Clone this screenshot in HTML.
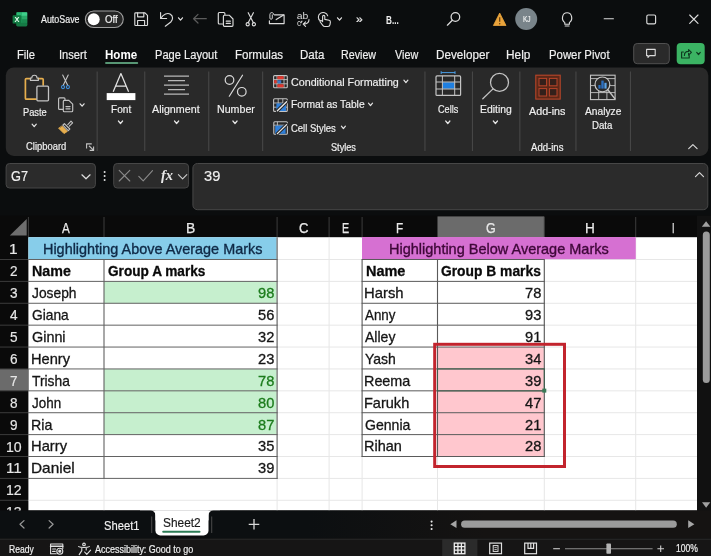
<!DOCTYPE html>
<html lang="en"><head><meta charset="utf-8"><title>Excel</title><style>
*{box-sizing:border-box;margin:0;padding:0}
html,body{width:711px;height:556px;overflow:hidden;background:#0b0d0e}
body{position:relative;font-family:"Liberation Sans",sans-serif}
#app{position:absolute;left:0;top:0;width:711px;height:556px;overflow:hidden;will-change:transform}
#app div,#app svg,#app span.t{position:absolute;display:block}
span.t{white-space:nowrap;line-height:1;transform-origin:0 0}
</style></head><body><div id="app">
<svg style="left:0;top:0;" width="711" height="556" viewBox="0 0 711 556" fill="none">
<rect x="16.5" y="12.3" width="10.7" height="14" rx="1.2" fill="#1d9a5b"/>
<rect x="16.5" y="12.3" width="5.4" height="3.6" fill="#2cb673"/>
<rect x="21.9" y="12.3" width="5.3" height="3.6" fill="#3fce8a"/>
<rect x="21.9" y="15.9" width="5.3" height="3.5" fill="#2aa868"/>
<rect x="21.9" y="19.4" width="5.3" height="3.4" fill="#1a8a50"/>
<rect x="16.5" y="22.8" width="10.7" height="3.5" rx="1" fill="#157a45"/>
<rect x="12.6" y="15.2" width="8.6" height="8.4" rx="0.9" fill="#117a42"/>
<text x="16.9" y="22.2" font-family="Liberation Sans, sans-serif" font-size="7.4" font-weight="700" fill="#e8fff2" text-anchor="middle">X</text>
</svg>
<span class="t" style='left:40.90px;top:14.00px;font-size:10.5px;color:#f0f0f0;transform:scaleX(0.8459);-webkit-text-stroke:0.18px;'>AutoSave</span>
<svg style="left:0;top:0" width="711" height="556" viewBox="0 0 711 556"><defs><linearGradient id="g0" x1="0" y1="0" x2="1" y2="0"><stop offset="0.2" stop-color="#0c0f11"/><stop offset="0.55" stop-color="#151312"/></linearGradient></defs>
<rect x="85.35" y="10.95" width="37.9" height="16.6" rx="8.45" fill="#262626" stroke="#a0a0a0" stroke-width="1.1"/>
<rect x="87.8" y="13.3" width="11.9" height="11.9" rx="5.95" fill="#ffffff"/>
</svg>
<span class="t" style='left:104.70px;top:15.00px;font-size:10px;color:#f0f0f0;transform:scaleX(0.9682);-webkit-text-stroke:0.18px;'>Off</span>
<svg style="left:0;top:0;" width="711" height="556" viewBox="0 0 711 556" fill="none">
<g stroke="#dcdcdc" stroke-width="1.15" stroke-linejoin="round" stroke-linecap="round">
<path d="M134.8 13.6 q0 -0.8 0.8 -0.8 h9.4 l2.5 2.5 v9.4 q0 0.8 -0.8 0.8 h-11.1 q-0.8 0 -0.8 -0.8 z"/>
<path d="M137.6 12.9 v3.9 h6.2 v-3.9"/>
<path d="M137.6 25.4 v-4.9 h7 v4.9"/>
<path d="M160.6 12.6 V18.5 H166.6"/>
<path d="M160.9 18.2 C163.4 14.2 167.6 12.4 170.4 14.3 C173.4 16.3 173 19.8 170.8 22 L165.3 26.2"/>
</g>
<path d="M178.5 17.8 l2.0 2.3000000000000003 l2.0 -2.3000000000000003" stroke="#e6e6e6" stroke-width="1.2" stroke-linecap="round" stroke-linejoin="round"/>
<g stroke="#5c5c5c" stroke-width="1.2" stroke-linecap="round" stroke-linejoin="round">
<path d="M206.3 18.7 H193.6 M198 14.4 L193.6 18.7 L198 23"/>
</g>
<g stroke="#dcdcdc" stroke-width="1.15" stroke-linejoin="round" stroke-linecap="round">
<path d="M222.5 24 h-3.2 q-1 0 -1 -1 v-9.5 q0 -1 1 -1 h4.6 q1 0 1 1 v1"/>
<path d="M223.4 16.2 q0 -1 1 -1 h4.8 l3.8 3.8 v6.3 q0 1 -1 1 h-7.6 q-1 0 -1 -1 z"/>
<path d="M226.3 21.2 h4 M226.3 23.4 h4" stroke-width="1.3"/>
<path d="M248.2 12.7 L253.4 22.8 M253.4 12.7 L248.2 22.8"/>
<circle cx="247.7" cy="24.3" r="1.6"/>
<circle cx="253.9" cy="24.3" r="1.6"/>
<path d="M274.5 14.8 H284.1 V23.6 H269.4 V20.8"/>
<path d="M276.2 19.6 L283.6 15"/>
<path d="M273.8 14.5 c0 -2.6 -3.9 -2.6 -3.9 0 v3.6 c0 1.6 2.4 1.6 2.4 0 v-3.2" stroke-width="0.95"/>
</g>
<text x="296.7" y="18.6" font-family="Liberation Sans, sans-serif" font-size="8.2" fill="#dcdcdc" textLength="11.6" lengthAdjust="spacingAndGlyphs">ab</text>
<text x="296.9" y="25.6" font-family="Liberation Sans, sans-serif" font-size="8.2" fill="#dcdcdc">c</text>
<g stroke="#dcdcdc" stroke-width="1.1" stroke-linejoin="round" stroke-linecap="round">
<path d="M309 19.6 c0 3 -2 4.6 -5.6 4.6 M305.6 21.8 L303.2 24.2 L305.6 26.4"/>
<path d="M302 21.2 l-1.2 1.6"/>
<path d="M320.3 20.8 c-2.6 -1.6 -2.6 -5.6 0 -7.4 c2.6 -1.8 6.6 -0.8 7.4 2.4"/>
<path d="M322.6 21.6 v-5.2 c0 -1.4 2.2 -1.4 2.2 0 v3 l4.3 0.9 c1 0.2 1.4 0.8 1.3 1.8 l-0.4 2.6 c-0.2 1.2 -0.9 1.8 -2 1.8 h-3.2 c-0.9 0 -1.5 -0.4 -2 -1.1 l-2.6 -3.4 c-0.6 -0.9 0.8 -1.9 1.6 -1.1 z"/>
</g>
<path d="M337.5 17.8 l2.0 2.3000000000000003 l2.0 -2.3000000000000003" stroke="#e6e6e6" stroke-width="1.2" stroke-linecap="round" stroke-linejoin="round"/>
</svg>
<span class="t" style='left:356.20px;top:14.00px;font-size:10.5px;color:#f0f0f0;transform:scaleX(1.1583);-webkit-text-stroke:0.18px;'>»</span>
<span class="t" style='left:386.20px;top:15.00px;font-size:11px;color:#f0f0f0;font-weight:700;transform:scaleX(0.7417);'>B...</span>
<svg style="left:0;top:0;" width="711" height="556" viewBox="0 0 711 556" fill="none">
<g stroke="#dcdcdc" stroke-width="1.25" stroke-linecap="round">
<circle cx="455.4" cy="17" r="4.3"/>
<path d="M452.3 20.2 L447.4 25.2"/>
</g>
<path d="M499.7 13 L506 25.5 H493.4 Z" fill="#e9a33b" stroke="#e9a33b" stroke-width="0.8" stroke-linejoin="round"/>
<path d="M499.7 17.2 V21.8" stroke="#5a3a10" stroke-width="1.2"/>
<circle cx="499.7" cy="23.8" r="0.75" fill="#5a3a10"/>
<circle cx="526.2" cy="19" r="11" fill="#79848a"/>
<g stroke="#dcdcdc" stroke-width="1.15" stroke-linejoin="round" stroke-linecap="round">
<path d="M564.8 22.6 c-4 -3 -2.6 -9.8 2.3 -9.8 c4.9 0 6.300 6.8 2.3 9.800 v1.6 h-4.6 z"/>
<path d="M565.2 26 h3.8"/>
<path d="M604.2 18.7 H613.4"/>
<rect x="646.8" y="15" width="8.8" height="8.8" rx="1.4"/>
<path d="M689.7 15 L698 23.3 M698 15 L689.7 23.3"/>
</g>
</svg>
<span class="t" style='left:522.60px;top:15.00px;font-size:8.5px;color:#eef0f0;transform:scaleX(0.7705);-webkit-text-stroke:0.18px;'>KJ</span>
<span class="t" style='left:17.20px;top:49.00px;font-size:12.5px;color:#f0f0f0;transform:scaleX(0.8989);-webkit-text-stroke:0.18px;'>File</span>
<span class="t" style='left:58.51px;top:49.00px;font-size:12.5px;color:#f0f0f0;transform:scaleX(0.8915);-webkit-text-stroke:0.18px;'>Insert</span>
<span class="t" style='left:105.40px;top:49.00px;font-size:12.5px;color:#fff;font-weight:700;transform:scaleX(0.9273);'>Home</span>
<span class="t" style='left:154.51px;top:49.00px;font-size:12.5px;color:#f0f0f0;transform:scaleX(0.8885);-webkit-text-stroke:0.18px;'>Page Layout</span>
<span class="t" style='left:235.48px;top:49.00px;font-size:12.5px;color:#f0f0f0;transform:scaleX(0.9234);-webkit-text-stroke:0.18px;'>Formulas</span>
<span class="t" style='left:299.98px;top:49.00px;font-size:12.5px;color:#f0f0f0;transform:scaleX(0.9213);-webkit-text-stroke:0.18px;'>Data</span>
<span class="t" style='left:341.14px;top:49.00px;font-size:12.5px;color:#f0f0f0;transform:scaleX(0.8558);-webkit-text-stroke:0.18px;'>Review</span>
<span class="t" style='left:394.80px;top:49.00px;font-size:12.5px;color:#f0f0f0;transform:scaleX(0.8638);-webkit-text-stroke:0.18px;'>View</span>
<span class="t" style='left:436.06px;top:49.00px;font-size:12.5px;color:#f0f0f0;transform:scaleX(0.9379);-webkit-text-stroke:0.18px;'>Developer</span>
<span class="t" style='left:506.45px;top:49.00px;font-size:12.5px;color:#f0f0f0;transform:scaleX(0.9472);-webkit-text-stroke:0.18px;'>Help</span>
<span class="t" style='left:548.99px;top:49.00px;font-size:12.5px;color:#f0f0f0;transform:scaleX(0.9083);-webkit-text-stroke:0.18px;'>Power Pivot</span>
<svg style="left:0;top:0" width="711" height="556" viewBox="0 0 711 556">
<rect x="105.1" y="62.3" width="33.1" height="1.5" rx="0.7" fill="#72c496"/>
<rect x="633.7" y="43.5" width="35.6" height="20.2" rx="3.5" fill="#2a2a2a" stroke="#505050" stroke-width="1"/>
<rect x="676.7" y="43" width="28" height="21.2" rx="4" fill="#3bb363"/>
</svg>
<svg style="left:0;top:0;" width="711" height="556" viewBox="0 0 711 556" fill="none">
<path d="M646.6 49.4 h8.6 v6.2 h-5.6 l-1.6 1.8 v-1.8 h-1.4 z" stroke="#dcdcdc" stroke-width="1.1" stroke-linejoin="round"/>
<g stroke="#0f3a20" stroke-width="1.15" stroke-linejoin="round" stroke-linecap="round">
<path d="M683.4 52 h-1.800 v6 h7.6 v-2.4"/>
<path d="M684.4 55.4 c0 -2.6 1.6 -4 4.2 -4 v-1.800 l2.800 2.800 l-2.800 2.800 v-1.800"/>
</g>
<path d="M696.7 52.4 l1.7999999999999998 2.1 l1.7999999999999998 -2.1" stroke="#0f3a20" stroke-width="1.2" stroke-linecap="round" stroke-linejoin="round"/>
</svg>
<svg style="left:0;top:0" width="711" height="556" viewBox="0 0 711 556">
<rect x="5.8" y="67.4" width="702.5" height="88.5" rx="8" fill="#292929"/>
<rect x="96.6" y="71.5" width="1.1" height="79.5" fill="#464646"/>
<rect x="144.2" y="71.5" width="1.1" height="79.5" fill="#464646"/>
<rect x="208.2" y="71.5" width="1.1" height="79.5" fill="#464646"/>
<rect x="262.1" y="71.5" width="1.1" height="79.5" fill="#464646"/>
<rect x="424.4" y="71.5" width="1.1" height="79.5" fill="#464646"/>
<rect x="471.9" y="71.5" width="1.1" height="79.5" fill="#464646"/>
<rect x="519.3" y="71.5" width="1.1" height="79.5" fill="#464646"/>
<rect x="575.4" y="71.5" width="1.1" height="79.5" fill="#464646"/>
<rect x="629.9" y="71.5" width="1.1" height="79.5" fill="#464646"/>
</svg>
<svg style="left:0;top:0;" width="711" height="556" viewBox="0 0 711 556" fill="none">
<!-- paste -->
<g stroke-linejoin="round" stroke-linecap="round">
<path d="M30.4 78.600 H26.4 q-1 0 -1 1 V98.2 q0 1 1 1 H36" stroke="#e6ae4e" stroke-width="1.7"/>
<path d="M38.2 78.600 H42.2 q1 0 1 1 V85" stroke="#e6ae4e" stroke-width="1.7"/>
<path d="M30.4 80.4 v-2.400 h1.400 c0 -3.600 5.200 -3.600 5.200 0 h1.400 v2.400 z" stroke="#c4c4c4" stroke-width="1.1"/>
<rect x="36.9" y="86.2" width="11.6" height="14.6" rx="1" stroke="#c4c4c4" stroke-width="1.3" fill="#292929"/>
</g>
<path d="M32.1 124.2 l2.1 2.5 l2.1 -2.5" stroke="#e6e6e6" stroke-width="1.2" stroke-linecap="round" stroke-linejoin="round"/>
<!-- scissors -->
<g stroke-linecap="round">
<path d="M62.7 75 L67.8 85.6 M68.2 75 L63.100 85.6" stroke="#c4c4c4" stroke-width="1.1"/>
<circle cx="63" cy="87.1" r="1.55" stroke="#3f8fdc" stroke-width="1.1"/>
<circle cx="67.900" cy="87.1" r="1.55" stroke="#3f8fdc" stroke-width="1.1"/>
</g>
<!-- copy -->
<g stroke="#c4c4c4" stroke-width="1.15" stroke-linejoin="round" stroke-linecap="round">
<path d="M62.6 109.4 h-3 q-1 0 -1 -1 v-9.600 q0 -1 1 -1 h4.400 q1 0 1 1 v1"/>
<path d="M63.3 101.4 q0 -1 1 -1 h4.600 l3.800 3.800 v6.500 q0 1 -1 1 h-7.400 q-1 0 -1 -1 z"/>
<path d="M66 106.600 h4 M66 108.800 h4" stroke-width="1.3"/>
</g>
<path d="M80.1 103.8 l2.0 2.4000000000000004 l2.0 -2.4000000000000004" stroke="#e6e6e6" stroke-width="1.2" stroke-linecap="round" stroke-linejoin="round"/>
<!-- format painter -->
<g stroke-linejoin="round" stroke-linecap="round">
<path d="M67.8 124.600 l3.200 -3.400 l1.600 1.600 l-3.300 3.300" stroke="#c4c4c4" stroke-width="1.1"/>
<path d="M64.4 123.600 l5.400 5.400 l-1.600 1.600 l-5.400 -5.400 z" stroke="#c4c4c4" stroke-width="1.1"/>
<path d="M62.2 126.200 l5.200 5.200 l-3.400 2.200 l-5.200 -5.200 z" fill="#e6ae4e" stroke="#e6ae4e" stroke-width="0.8"/>
</g>
<!-- launcher -->
<g stroke="#c4c4c4" stroke-width="1.1" stroke-linecap="square">
<path d="M86.600 148 V143.900 H91.200"/>
<path d="M89.400 146.200 L93.400 150.200 M93.600 147 V150.400 H90.200"/>
</g>
<!-- font A -->
<path d="M113.200 91.800 L120.900 73.600 L128.600 91.800 M115.900 86 H125.900" stroke="#e4e4e4" stroke-width="1.25" stroke-linejoin="round"/>
<rect x="106.700" y="93.100" width="28.700" height="7" fill="#ffffff"/>
<path d="M118.4 121 l2.1 2.5 l2.1 -2.5" stroke="#e6e6e6" stroke-width="1.2" stroke-linecap="round" stroke-linejoin="round"/>
<!-- alignment -->
<g stroke="#b8b8b8" stroke-width="1.25">
<path d="M164 76.100 H189 M168 80.600 H185 M164 85.100 H189 M168 89.600 H185 M164 94.100 H189"/>
</g>
<path d="M174.5 121 l2.1 2.5 l2.1 -2.5" stroke="#e6e6e6" stroke-width="1.2" stroke-linecap="round" stroke-linejoin="round"/>
<!-- number -->
<g stroke="#dadada" stroke-width="1.2" stroke-linecap="round">
<ellipse cx="229.500" cy="80" rx="4.300" ry="4.300"/>
<ellipse cx="241.800" cy="91.800" rx="4.300" ry="4.300"/>
<path d="M242.500 75.200 L229.300 96.200"/>
</g>
<path d="M232.9 121 l2.1 2.5 l2.1 -2.5" stroke="#e6e6e6" stroke-width="1.2" stroke-linecap="round" stroke-linejoin="round"/>
<!-- conditional formatting -->
<rect x="273.600" y="75.600" width="13.700" height="12.200" rx="1" stroke="#c4c4c4" stroke-width="1.1"/>
<path d="M277 75.600 V87.800 M284 75.600 V87.800 M273.600 79.600 H287.300 M273.600 83.800 H287.300" stroke="#c4c4c4" stroke-width="0.9"/>
<rect x="277.400" y="76.200" width="6.200" height="3" fill="#e2382e"/>
<rect x="274.200" y="80.100" width="2.400" height="3.300" fill="#e2382e"/>
<rect x="277.400" y="84.300" width="6.200" height="3" fill="#e2382e"/>
<rect x="277.600" y="80.300" width="3.600" height="3" fill="#3f78c8"/>
<path d="M403.9 80.2 l2.0 2.4000000000000004 l2.0 -2.4000000000000004" stroke="#e6e6e6" stroke-width="1.2" stroke-linecap="round" stroke-linejoin="round"/>
<!-- format as table -->
<rect x="273.600" y="98.800" width="13.700" height="12.600" rx="1" stroke="#c4c4c4" stroke-width="1.1"/>
<path d="M278.200 98.800 V111.400 M282.800 98.800 V111.400 M273.600 103 H287.300 M273.600 107.200 H287.300" stroke="#c4c4c4" stroke-width="0.9"/>
<rect x="276.400" y="103.400" width="9.600" height="7.600" fill="#2f7fd8"/>
<path d="M277.400 110.800 L286.600 101.800" stroke="#292929" stroke-width="3.400" stroke-linecap="round"/>
<path d="M277.400 110.800 L286.600 101.800" stroke="#e8e8e8" stroke-width="1.300" stroke-linecap="round"/>
<path d="M368.5 103.2 l2.0 2.4000000000000004 l2.0 -2.4000000000000004" stroke="#e6e6e6" stroke-width="1.2" stroke-linecap="round" stroke-linejoin="round"/>
<!-- cell styles -->
<rect x="273.800" y="121.800" width="13.600" height="12.400" rx="1" stroke="#c4c4c4" stroke-width="1.1"/>
<path d="M273.800 125.200 H287.400 M277.400 121.800 V134.200" stroke="#c4c4c4" stroke-width="0.9"/>
<rect x="275.200" y="125.600" width="10.400" height="8.200" fill="#2f7fd8"/>
<path d="M277.400 133.600 L286.600 124.600" stroke="#292929" stroke-width="3.400" stroke-linecap="round"/>
<path d="M277.400 133.600 L286.600 124.600" stroke="#e8e8e8" stroke-width="1.300" stroke-linecap="round"/>
<path d="M341.4 126.2 l2.0 2.4000000000000004 l2.0 -2.4000000000000004" stroke="#e6e6e6" stroke-width="1.2" stroke-linecap="round" stroke-linejoin="round"/>
<!-- cells -->
<path d="M441.200 72.600 H455 M441.200 71.200 V74 M455 71.200 V74" stroke="#4a9ee6" stroke-width="1"/>
<rect x="442.600" y="82.200" width="12" height="6.600" fill="#1f7fe0"/>
<rect x="436" y="75.900" width="24.600" height="19.500" rx="1" stroke="#c4c4c4" stroke-width="1.2"/>
<path d="M442.400 75.900 V95.400 M454.700 75.900 V95.400 M436 82 H460.600 M436 89 H460.600" stroke="#c4c4c4" stroke-width="1"/>
<path d="M445.7 121 l2.1 2.5 l2.1 -2.5" stroke="#e6e6e6" stroke-width="1.2" stroke-linecap="round" stroke-linejoin="round"/>
<!-- editing -->
<g stroke="#c4c4c4" stroke-width="1.25" stroke-linecap="round">
<circle cx="499.500" cy="82.400" r="9"/>
<path d="M493 88.900 L482.800 98.800"/>
</g>
<path d="M493.3 121 l2.1 2.5 l2.1 -2.5" stroke="#e6e6e6" stroke-width="1.2" stroke-linecap="round" stroke-linejoin="round"/>
<!-- add-ins -->
<rect x="535.800" y="75.200" width="24.400" height="23.900" fill="#5a2818" stroke="#b8452a" stroke-width="1.1"/>
<g fill="#33201b" stroke="#b8452a" stroke-width="1">
<rect x="539" y="78.400" width="7.600" height="7.400"/>
<rect x="549.400" y="78.400" width="7.600" height="7.400"/>
<rect x="539" y="88.600" width="7.600" height="7.400"/>
<rect x="549.400" y="88.600" width="7.600" height="7.400"/>
</g>
<!-- analyze data -->
<rect x="590.500" y="75.200" width="24.600" height="24.400" stroke="#c4c4c4" stroke-width="1.1"/>
<path d="M590.500 78.600 H615.100 M590.500 85.600 H615.100 M590.500 92.600 H615.100 M598.700 78.600 V99.600 M606.900 78.600 V99.600" stroke="#c4c4c4" stroke-width="0.9"/>
<circle cx="602.400" cy="84.400" r="7.400" fill="#292929" stroke="#c4c4c4" stroke-width="1.2"/>
<path d="M607.800 89.800 L614.800 98.600" stroke="#c4c4c4" stroke-width="1.500" stroke-linecap="round"/>
<rect x="598.400" y="85" width="2.200" height="3.600" fill="#2c6fc0"/>
<rect x="601.300" y="80.600" width="2.400" height="8" fill="#2c6fc0"/>
<rect x="604.400" y="82.800" width="2.200" height="5.800" fill="#5aa4ea"/>
<!-- collapse chevron -->
<path d="M688.7 148.6 L692.9 144.7 L697.1 148.6" stroke="#dcdcdc" stroke-width="1.15" stroke-linecap="round" stroke-linejoin="round"/>
</svg>
<span class="t" style='left:22.90px;top:107.00px;font-size:11.5px;color:#f0f0f0;transform:scaleX(0.8083);-webkit-text-stroke:0.18px;'>Paste</span>
<span class="t" style='left:26.10px;top:142.00px;font-size:10px;color:#f0f0f0;transform:scaleX(0.9410);-webkit-text-stroke:0.18px;'>Clipboard</span>
<span class="t" style='left:110.80px;top:104.00px;font-size:11.5px;color:#f0f0f0;transform:scaleX(0.8797);-webkit-text-stroke:0.18px;'>Font</span>
<span class="t" style='left:152.40px;top:104.00px;font-size:11.5px;color:#f0f0f0;transform:scaleX(0.9308);-webkit-text-stroke:0.18px;'>Alignment</span>
<span class="t" style='left:216.60px;top:104.00px;font-size:11.5px;color:#f0f0f0;transform:scaleX(0.9264);-webkit-text-stroke:0.18px;'>Number</span>
<span class="t" style='left:291.40px;top:77.00px;font-size:11.5px;color:#f0f0f0;transform:scaleX(0.9319);-webkit-text-stroke:0.18px;'>Conditional Formatting</span>
<span class="t" style='left:291.40px;top:99.00px;font-size:11.5px;color:#f0f0f0;transform:scaleX(0.8952);-webkit-text-stroke:0.18px;'>Format as Table</span>
<span class="t" style='left:291.40px;top:123.00px;font-size:11.5px;color:#f0f0f0;transform:scaleX(0.8237);-webkit-text-stroke:0.18px;'>Cell Styles</span>
<span class="t" style='left:331.40px;top:143.00px;font-size:10px;color:#f0f0f0;transform:scaleX(0.9162);-webkit-text-stroke:0.18px;'>Styles</span>
<span class="t" style='left:437.90px;top:104.00px;font-size:11.5px;color:#f0f0f0;transform:scaleX(0.7923);-webkit-text-stroke:0.18px;'>Cells</span>
<span class="t" style='left:479.90px;top:104.00px;font-size:11.5px;color:#f0f0f0;transform:scaleX(0.9046);-webkit-text-stroke:0.18px;'>Editing</span>
<span class="t" style='left:529.40px;top:106.00px;font-size:11.5px;color:#f0f0f0;transform:scaleX(0.9339);-webkit-text-stroke:0.18px;'>Add-ins</span>
<span class="t" style='left:530.90px;top:143.00px;font-size:10px;color:#f0f0f0;transform:scaleX(0.9571);-webkit-text-stroke:0.18px;'>Add-ins</span>
<span class="t" style='left:584.90px;top:106.00px;font-size:11.5px;color:#f0f0f0;transform:scaleX(0.8873);-webkit-text-stroke:0.18px;'>Analyze</span>
<span class="t" style='left:592.40px;top:120.00px;font-size:11.5px;color:#f0f0f0;transform:scaleX(0.8415);-webkit-text-stroke:0.18px;'>Data</span>
<svg style="left:0;top:0" width="711" height="556" viewBox="0 0 711 556">
<rect x="6.1" y="163.5" width="89.3" height="24.5" rx="3.5" fill="#2b2b2b" stroke="#474747" stroke-width="1"/>
<rect x="113.7" y="163.5" width="74.9" height="24.5" rx="3.5" fill="#2b2b2b" stroke="#474747" stroke-width="1"/>
<rect x="192.9" y="163.5" width="514.9" height="46.2" rx="4.5" fill="#2b2b2b" stroke="#474747" stroke-width="1"/>
</svg>
<svg style="left:0;top:0;" width="711" height="556" viewBox="0 0 711 556" fill="none">
<path d="M81.900 174.800 L86 178.800 L90.100 174.800" stroke="#e0e0e0" stroke-width="1.2" stroke-linecap="round" stroke-linejoin="round"/>
<circle cx="104.600" cy="172" r="1" fill="#e0e0e0"/><circle cx="104.600" cy="176" r="1" fill="#e0e0e0"/><circle cx="104.600" cy="180" r="1" fill="#e0e0e0"/>
<path d="M119.200 170.400 L129.800 181 M129.800 170.400 L119.200 181" stroke="#8a8a8a" stroke-width="1.1" stroke-linecap="round"/>
<path d="M138.800 176.400 L143.200 180.800 L152.500 170.600" stroke="#8a8a8a" stroke-width="1.1" stroke-linecap="round" stroke-linejoin="round"/>
<path d="M178.400 174.600 L182.600 178.800 L186.800 174.600" stroke="#cfcfcf" stroke-width="1.1" stroke-linecap="round" stroke-linejoin="round"/>
<path d="M695.5 176.6 L699.5 172.7 L703.5 176.6" stroke="#dcdcdc" stroke-width="1.15" stroke-linecap="round" stroke-linejoin="round"/>
</svg>
<span class="t" style='left:10.90px;top:168.00px;font-size:15px;color:#f0f0f0;transform:scaleX(0.8517);-webkit-text-stroke:0.18px;'>G7</span>
<span class="t" style='left:203.70px;top:168.00px;font-size:15px;color:#f0f0f0;transform:scaleX(0.9760);-webkit-text-stroke:0.18px;'>39</span>
<span class="t" style='left:161.00px;top:167.00px;font-size:15.5px;color:#e8e8e8;font-weight:700;font-family:"Liberation Serif", serif;font-style:italic;transform:scaleX(0.9307);'>fx</span>
<svg style="left:0;top:0" width="711" height="556" viewBox="0 0 711 556">
<rect x="0" y="215.5" width="711" height="294.9" fill="#0a0a0a"/>
<rect x="28.4" y="237.2" width="668.6" height="273.2" fill="#ffffff"/>
<rect x="437.5" y="216.4" width="106.8" height="20.8" fill="#6b6b6b"/>
<rect x="0" y="368.94" width="28.4" height="21.89" fill="#6b6b6b"/>
<rect x="27.9" y="217" width="1" height="20.2" fill="#3c3c3c"/>
<rect x="103.5" y="217" width="1" height="20.2" fill="#3c3c3c"/>
<rect x="276.6" y="217" width="1" height="20.2" fill="#3c3c3c"/>
<rect x="328.6" y="217" width="1" height="20.2" fill="#3c3c3c"/>
<rect x="361.6" y="217" width="1" height="20.2" fill="#3c3c3c"/>
<rect x="437" y="217" width="1" height="20.2" fill="#3c3c3c"/>
<rect x="543.8" y="217" width="1" height="20.2" fill="#3c3c3c"/>
<rect x="635.2" y="217" width="1" height="20.2" fill="#3c3c3c"/>
<rect x="0" y="258.99" width="28.4" height="1" fill="#3c3c3c"/>
<rect x="0" y="280.88" width="28.4" height="1" fill="#3c3c3c"/>
<rect x="0" y="302.77" width="28.4" height="1" fill="#3c3c3c"/>
<rect x="0" y="324.66" width="28.4" height="1" fill="#3c3c3c"/>
<rect x="0" y="346.55" width="28.4" height="1" fill="#3c3c3c"/>
<rect x="0" y="368.44" width="28.4" height="1" fill="#3c3c3c"/>
<rect x="0" y="390.33" width="28.4" height="1" fill="#3c3c3c"/>
<rect x="0" y="412.22" width="28.4" height="1" fill="#3c3c3c"/>
<rect x="0" y="434.11" width="28.4" height="1" fill="#3c3c3c"/>
<rect x="0" y="456" width="28.4" height="1" fill="#3c3c3c"/>
<rect x="0" y="477.89" width="28.4" height="1" fill="#3c3c3c"/>
<rect x="0" y="499.78" width="28.4" height="1" fill="#3c3c3c"/>
</svg>
<svg style="left:0;top:0;" width="711" height="556" viewBox="0 0 711 556" fill="none"><path d="M26.7 219 V235.6 H9.8 Z" fill="#6e6e6e"/></svg>
<svg style="left:0;top:0" width="711" height="556" viewBox="0 0 711 556">
<rect x="28.4" y="237.2" width="248.7" height="22.29" fill="#87cdea"/>
<rect x="362.1" y="237.2" width="273.6" height="22.29" fill="#d670d2"/>
<rect x="104" y="281.38" width="173.1" height="21.89" fill="#c6efce"/>
<rect x="104" y="368.94" width="173.1" height="21.89" fill="#c6efce"/>
<rect x="104" y="390.83" width="173.1" height="21.89" fill="#c6efce"/>
<rect x="104" y="412.72" width="173.1" height="21.89" fill="#c6efce"/>
<rect x="437.5" y="347.05" width="106.8" height="21.89" fill="#ffc7ce"/>
<rect x="437.5" y="368.94" width="106.8" height="21.89" fill="#ffc7ce"/>
<rect x="437.5" y="390.83" width="106.8" height="21.89" fill="#ffc7ce"/>
<rect x="437.5" y="412.72" width="106.8" height="21.89" fill="#ffc7ce"/>
<rect x="437.5" y="434.61" width="106.8" height="21.89" fill="#ffc7ce"/>
<rect x="276.6" y="237.2" width="1" height="273.2" fill="#e7e7e7"/>
<rect x="328.6" y="237.2" width="1" height="273.2" fill="#e7e7e7"/>
<rect x="543.8" y="237.2" width="1" height="273.2" fill="#e7e7e7"/>
<rect x="635.2" y="237.2" width="1" height="273.2" fill="#e7e7e7"/>
<rect x="361.6" y="456.5" width="1" height="53.9" fill="#e7e7e7"/>
<rect x="437" y="456.5" width="1" height="53.9" fill="#e7e7e7"/>
<rect x="103.5" y="478.39" width="1" height="32.01" fill="#e7e7e7"/>
<rect x="277.1" y="258.99" width="85" height="1" fill="#e7e7e7"/>
<rect x="544.3" y="258.99" width="152.7" height="1" fill="#e7e7e7"/>
<rect x="277.1" y="280.88" width="85" height="1" fill="#e7e7e7"/>
<rect x="544.3" y="280.88" width="152.7" height="1" fill="#e7e7e7"/>
<rect x="277.1" y="302.77" width="85" height="1" fill="#e7e7e7"/>
<rect x="544.3" y="302.77" width="152.7" height="1" fill="#e7e7e7"/>
<rect x="277.1" y="324.66" width="85" height="1" fill="#e7e7e7"/>
<rect x="544.3" y="324.66" width="152.7" height="1" fill="#e7e7e7"/>
<rect x="277.1" y="346.55" width="85" height="1" fill="#e7e7e7"/>
<rect x="544.3" y="346.55" width="152.7" height="1" fill="#e7e7e7"/>
<rect x="277.1" y="368.44" width="85" height="1" fill="#e7e7e7"/>
<rect x="544.3" y="368.44" width="152.7" height="1" fill="#e7e7e7"/>
<rect x="277.1" y="390.33" width="85" height="1" fill="#e7e7e7"/>
<rect x="544.3" y="390.33" width="152.7" height="1" fill="#e7e7e7"/>
<rect x="277.1" y="412.22" width="85" height="1" fill="#e7e7e7"/>
<rect x="544.3" y="412.22" width="152.7" height="1" fill="#e7e7e7"/>
<rect x="277.1" y="434.11" width="85" height="1" fill="#e7e7e7"/>
<rect x="544.3" y="434.11" width="152.7" height="1" fill="#e7e7e7"/>
<rect x="277.1" y="456" width="85" height="1" fill="#e7e7e7"/>
<rect x="544.3" y="456" width="152.7" height="1" fill="#e7e7e7"/>
<rect x="277.1" y="477.89" width="85" height="1" fill="#e7e7e7"/>
<rect x="362.1" y="477.89" width="334.9" height="1" fill="#e7e7e7"/>
<rect x="277.1" y="499.78" width="85" height="1" fill="#e7e7e7"/>
<rect x="362.1" y="499.78" width="334.9" height="1" fill="#e7e7e7"/>
<rect x="28.4" y="499.78" width="248.7" height="1" fill="#e7e7e7"/>
<rect x="362.1" y="237.2" width="273.6" height="21.99" fill="#d670d2"/>
<rect x="28.4" y="258.99" width="249.2" height="1" fill="#626262"/>
<rect x="28.4" y="280.88" width="249.2" height="1" fill="#626262"/>
<rect x="28.4" y="302.77" width="249.2" height="1" fill="#626262"/>
<rect x="28.4" y="324.66" width="249.2" height="1" fill="#626262"/>
<rect x="28.4" y="346.55" width="249.2" height="1" fill="#626262"/>
<rect x="28.4" y="368.44" width="249.2" height="1" fill="#626262"/>
<rect x="28.4" y="390.33" width="249.2" height="1" fill="#626262"/>
<rect x="28.4" y="412.22" width="249.2" height="1" fill="#626262"/>
<rect x="28.4" y="434.11" width="249.2" height="1" fill="#626262"/>
<rect x="28.4" y="456" width="249.2" height="1" fill="#626262"/>
<rect x="28.4" y="477.89" width="249.2" height="1" fill="#626262"/>
<rect x="103.45" y="259.49" width="1.1" height="219.4" fill="#626262"/>
<rect x="276.55" y="237.2" width="1.1" height="241.69" fill="#626262"/>
<rect x="361.6" y="258.99" width="183.2" height="1" fill="#5a5a5a"/>
<rect x="361.6" y="280.88" width="183.2" height="1" fill="#5a5a5a"/>
<rect x="361.6" y="302.77" width="183.2" height="1" fill="#5a5a5a"/>
<rect x="361.6" y="324.66" width="183.2" height="1" fill="#5a5a5a"/>
<rect x="361.6" y="346.55" width="183.2" height="1" fill="#5a5a5a"/>
<rect x="361.6" y="368.44" width="183.2" height="1" fill="#5a5a5a"/>
<rect x="361.6" y="390.33" width="183.2" height="1" fill="#5a5a5a"/>
<rect x="361.6" y="412.22" width="183.2" height="1" fill="#5a5a5a"/>
<rect x="361.6" y="434.11" width="183.2" height="1" fill="#5a5a5a"/>
<rect x="361.6" y="456" width="183.2" height="1" fill="#5a5a5a"/>
<rect x="361.55" y="259.49" width="1.1" height="197.51" fill="#5a5a5a"/>
<rect x="436.95" y="259.49" width="1.1" height="197.51" fill="#5a5a5a"/>
<rect x="543.75" y="259.49" width="1.1" height="197.51" fill="#5a5a5a"/>
</svg>
<span class="t" style='left:62.30px;top:221.00px;font-size:14.5px;color:#e8e8e8;transform:scaleX(0.8050);-webkit-text-stroke:0.25px;'>A</span>
<span class="t" style='left:186.34px;top:221.00px;font-size:14.5px;color:#e8e8e8;transform:scaleX(0.9562);-webkit-text-stroke:0.25px;'>B</span>
<span class="t" style='left:298.80px;top:221.00px;font-size:14.5px;color:#e8e8e8;transform:scaleX(0.9050);-webkit-text-stroke:0.25px;'>C</span>
<span class="t" style='left:342.06px;top:221.00px;font-size:14.5px;color:#e8e8e8;transform:scaleX(0.7389);-webkit-text-stroke:0.25px;'>E</span>
<span class="t" style='left:396.09px;top:221.00px;font-size:14.5px;color:#e8e8e8;transform:scaleX(0.8063);-webkit-text-stroke:0.25px;'>F</span>
<span class="t" style='left:486.40px;top:221.00px;font-size:14.5px;color:#e8e8e8;transform:scaleX(0.8591);-webkit-text-stroke:0.25px;'>G</span>
<span class="t" style='left:584.96px;top:221.00px;font-size:14.5px;color:#e8e8e8;transform:scaleX(0.9389);-webkit-text-stroke:0.25px;'>H</span>
<span class="t" style='left:672.27px;top:221.00px;font-size:14.5px;color:#e8e8e8;transform:scaleX(0.6250);-webkit-text-stroke:0.25px;'>I</span>
<span class="t" style='left:8.76px;top:241.00px;font-size:15px;color:#e6e6e6;transform:scaleX(1.0357);-webkit-text-stroke:0.18px;'>1</span>
<span class="t" style='left:9.80px;top:263.00px;font-size:15px;color:#e6e6e6;transform:scaleX(0.9062);-webkit-text-stroke:0.18px;'>2</span>
<span class="t" style='left:9.80px;top:285.00px;font-size:15px;color:#e6e6e6;transform:scaleX(0.9062);-webkit-text-stroke:0.18px;'>3</span>
<span class="t" style='left:9.80px;top:307.00px;font-size:15px;color:#e6e6e6;transform:scaleX(0.9062);-webkit-text-stroke:0.18px;'>4</span>
<span class="t" style='left:9.80px;top:329.00px;font-size:15px;color:#e6e6e6;transform:scaleX(0.9062);-webkit-text-stroke:0.18px;'>5</span>
<span class="t" style='left:9.80px;top:351.00px;font-size:15px;color:#e6e6e6;transform:scaleX(0.9062);-webkit-text-stroke:0.18px;'>6</span>
<span class="t" style='left:9.80px;top:373.00px;font-size:15px;color:#e6e6e6;transform:scaleX(0.9062);-webkit-text-stroke:0.18px;'>7</span>
<span class="t" style='left:9.80px;top:395.00px;font-size:15px;color:#e6e6e6;transform:scaleX(0.9062);-webkit-text-stroke:0.18px;'>8</span>
<span class="t" style='left:9.80px;top:417.00px;font-size:15px;color:#e6e6e6;transform:scaleX(0.9062);-webkit-text-stroke:0.18px;'>9</span>
<span class="t" style='left:5.66px;top:439.00px;font-size:15px;color:#e6e6e6;transform:scaleX(0.9418);-webkit-text-stroke:0.18px;'>10</span>
<span class="t" style='left:5.58px;top:460.00px;font-size:15px;color:#e6e6e6;transform:scaleX(1.0155);-webkit-text-stroke:0.18px;'>11</span>
<span class="t" style='left:5.66px;top:482.00px;font-size:15px;color:#e6e6e6;transform:scaleX(0.9418);-webkit-text-stroke:0.18px;'>12</span>
<span class="t" style='left:5.66px;top:504.00px;font-size:15px;color:#e6e6e6;transform:scaleX(0.9418);-webkit-text-stroke:0.18px;'>13</span>
<span class="t" style='left:42.91px;top:242.00px;font-size:14.5px;color:#0f2946;transform:scaleX(0.9946);-webkit-text-stroke:0.35px;'>Highlighting Above Average Marks</span>
<span class="t" style='left:388.60px;top:242.00px;font-size:14.5px;color:#3f0839;transform:scaleX(0.9997);-webkit-text-stroke:0.35px;'>Highlighting Below Average Marks</span>
<span class="t" style='left:32.40px;top:264.00px;font-size:14.5px;color:#0a0a0a;font-weight:700;transform:scaleX(0.9828);-webkit-text-stroke:0.3px;'>Name</span>
<span class="t" style='left:107.50px;top:264.00px;font-size:14.5px;color:#0a0a0a;font-weight:700;transform:scaleX(0.9395);-webkit-text-stroke:0.3px;'>Group A marks</span>
<span class="t" style='left:31.60px;top:286.00px;font-size:14.5px;color:#151515;transform:scaleX(0.9520);-webkit-text-stroke:0.3px;'>Joseph</span>
<span class="t" style='left:31.60px;top:308.00px;font-size:14.5px;color:#151515;transform:scaleX(0.9501);-webkit-text-stroke:0.3px;'>Giana</span>
<span class="t" style='left:31.60px;top:330.00px;font-size:14.5px;color:#151515;transform:scaleX(0.9917);-webkit-text-stroke:0.3px;'>Ginni</span>
<span class="t" style='left:30.59px;top:352.00px;font-size:14.5px;color:#151515;transform:scaleX(1.0084);-webkit-text-stroke:0.3px;'>Henry</span>
<span class="t" style='left:31.60px;top:374.00px;font-size:14.5px;color:#151515;transform:scaleX(0.9525);-webkit-text-stroke:0.3px;'>Trisha</span>
<span class="t" style='left:31.60px;top:396.00px;font-size:14.5px;color:#151515;transform:scaleX(0.9258);-webkit-text-stroke:0.3px;'>John</span>
<span class="t" style='left:30.62px;top:418.00px;font-size:14.5px;color:#151515;transform:scaleX(0.9796);-webkit-text-stroke:0.3px;'>Ria</span>
<span class="t" style='left:30.58px;top:439.00px;font-size:14.5px;color:#151515;transform:scaleX(1.0158);-webkit-text-stroke:0.3px;'>Harry</span>
<span class="t" style='left:30.54px;top:461.00px;font-size:14.5px;color:#151515;transform:scaleX(1.0618);-webkit-text-stroke:0.3px;'>Daniel</span>
<span class="t" style='left:257.90px;top:286.00px;font-size:14.5px;color:#1c7c1c;transform:scaleX(1.0116);-webkit-text-stroke:0.3px;'>98</span>
<span class="t" style='left:257.90px;top:308.00px;font-size:14.5px;color:#151515;transform:scaleX(1.0116);-webkit-text-stroke:0.3px;'>56</span>
<span class="t" style='left:257.90px;top:330.00px;font-size:14.5px;color:#151515;transform:scaleX(1.0116);-webkit-text-stroke:0.3px;'>32</span>
<span class="t" style='left:257.90px;top:352.00px;font-size:14.5px;color:#151515;transform:scaleX(1.0116);-webkit-text-stroke:0.3px;'>23</span>
<span class="t" style='left:257.90px;top:374.00px;font-size:14.5px;color:#1c7c1c;transform:scaleX(1.0116);-webkit-text-stroke:0.3px;'>78</span>
<span class="t" style='left:257.90px;top:396.00px;font-size:14.5px;color:#1c7c1c;transform:scaleX(1.0116);-webkit-text-stroke:0.3px;'>80</span>
<span class="t" style='left:257.90px;top:418.00px;font-size:14.5px;color:#1c7c1c;transform:scaleX(1.0116);-webkit-text-stroke:0.3px;'>87</span>
<span class="t" style='left:257.90px;top:439.00px;font-size:14.5px;color:#151515;transform:scaleX(1.0116);-webkit-text-stroke:0.3px;'>35</span>
<span class="t" style='left:257.90px;top:461.00px;font-size:14.5px;color:#151515;transform:scaleX(1.0116);-webkit-text-stroke:0.3px;'>39</span>
<span class="t" style='left:365.90px;top:264.00px;font-size:14.5px;color:#0a0a0a;font-weight:700;transform:scaleX(0.9980);-webkit-text-stroke:0.3px;'>Name</span>
<span class="t" style='left:440.90px;top:264.00px;font-size:14.5px;color:#0a0a0a;font-weight:700;transform:scaleX(0.9529);-webkit-text-stroke:0.3px;'>Group B marks</span>
<span class="t" style='left:364.28px;top:286.00px;font-size:14.5px;color:#151515;transform:scaleX(1.0222);-webkit-text-stroke:0.3px;'>Harsh</span>
<span class="t" style='left:365.30px;top:308.00px;font-size:14.5px;color:#151515;transform:scaleX(0.9216);-webkit-text-stroke:0.3px;'>Anny</span>
<span class="t" style='left:365.30px;top:330.00px;font-size:14.5px;color:#151515;transform:scaleX(0.9680);-webkit-text-stroke:0.3px;'>Alley</span>
<span class="t" style='left:365.30px;top:352.00px;font-size:14.5px;color:#151515;transform:scaleX(0.9637);-webkit-text-stroke:0.3px;'>Yash</span>
<span class="t" style='left:364.31px;top:374.00px;font-size:14.5px;color:#151515;transform:scaleX(0.9908);-webkit-text-stroke:0.3px;'>Reema</span>
<span class="t" style='left:364.30px;top:396.00px;font-size:14.5px;color:#151515;transform:scaleX(1.0019);-webkit-text-stroke:0.3px;'>Farukh</span>
<span class="t" style='left:365.30px;top:418.00px;font-size:14.5px;color:#151515;transform:scaleX(0.9698);-webkit-text-stroke:0.3px;'>Gennia</span>
<span class="t" style='left:364.30px;top:439.00px;font-size:14.5px;color:#151515;transform:scaleX(0.9981);-webkit-text-stroke:0.3px;'>Rihan</span>
<span class="t" style='left:525.20px;top:286.00px;font-size:14.5px;color:#151515;transform:scaleX(1.0116);-webkit-text-stroke:0.3px;'>78</span>
<span class="t" style='left:525.20px;top:308.00px;font-size:14.5px;color:#151515;transform:scaleX(1.0116);-webkit-text-stroke:0.3px;'>93</span>
<span class="t" style='left:525.20px;top:330.00px;font-size:14.5px;color:#151515;transform:scaleX(1.0116);-webkit-text-stroke:0.3px;'>91</span>
<span class="t" style='left:525.20px;top:352.00px;font-size:14.5px;color:#151515;transform:scaleX(1.0116);-webkit-text-stroke:0.3px;'>34</span>
<span class="t" style='left:525.20px;top:374.00px;font-size:14.5px;color:#151515;transform:scaleX(1.0116);-webkit-text-stroke:0.3px;'>39</span>
<span class="t" style='left:525.20px;top:396.00px;font-size:14.5px;color:#151515;transform:scaleX(1.0116);-webkit-text-stroke:0.3px;'>47</span>
<span class="t" style='left:525.20px;top:418.00px;font-size:14.5px;color:#151515;transform:scaleX(1.0116);-webkit-text-stroke:0.3px;'>21</span>
<span class="t" style='left:525.20px;top:439.00px;font-size:14.5px;color:#151515;transform:scaleX(1.0116);-webkit-text-stroke:0.3px;'>28</span>
<svg style="left:0;top:0" width="711" height="556" viewBox="0 0 711 556">
<rect x="437.45" y="368.89" width="106.9" height="21.99" fill="none" stroke="#3f5f4e" stroke-width="1.1"/>
<rect x="542.3" y="388.63" width="4" height="4" fill="#3b7a57"/>
<rect x="434.7" y="344.3" width="129.8" height="122.2" fill="none" stroke="#c2242d" stroke-width="3"/>
<rect x="697" y="215.5" width="14" height="295.9" fill="#111111"/>
<rect x="702.8" y="231.4" width="7" height="151.6" rx="3.5" fill="#9b9b9b"/>
</svg>
<svg style="left:0;top:0;" width="711" height="556" viewBox="0 0 711 556" fill="none"><path d="M701.8 226.8 L706.1 221.300 L710.400 226.8 Z" fill="#a0a0a0"/><path d="M702 502.200 L706.100 507.800 L710.300 502.200 Z" fill="#a0a0a0"/></svg>
<svg style="left:0;top:0" width="711" height="556" viewBox="0 0 711 556">
<rect x="140" y="510.4" width="80" height="10" fill="#ffffff"/>
<path d="M0 510.4 H150.4 A5 5 0 0 1 155.4 515.4 V538.6 H0 V510.4 Z" fill="#0c0f11"/>
<path d="M213.5 510.4 H711.2 V538.6 H208.5 V515.4 A5 5 0 0 1 213.5 510.4 Z" fill="url(#g0)"/>
<rect x="0" y="538.6" width="711" height="17.4" fill="#161515"/>
<rect x="0" y="538.7" width="711" height="1" fill="#2a2a2a"/>
<rect x="442.2" y="539" width="35.2" height="17" fill="#2b2b2b"/>
<path d="M155.4 510.4 H208.5 V530.5 A5 5 0 0 1 203.5 535.5 H160.4 A5 5 0 0 1 155.4 530.5 V510.4 Z" fill="#ffffff"/>
<rect x="162.2" y="530.7" width="38.3" height="2.1" rx="1" fill="#2e7d57"/>
<rect x="151.2" y="516.5" width="1" height="16.5" fill="#4a4a4a"/>
<rect x="211.2" y="516.5" width="1" height="16.5" fill="#4a4a4a"/>
</svg>
<svg style="left:0;top:0;" width="711" height="556" viewBox="0 0 711 556" fill="none">
<g stroke="#9a9a9a" stroke-width="1.2" stroke-linecap="round" stroke-linejoin="round">
<path d="M24 520.600 L20 524.300 L24 528"/>
<path d="M49.100 520.600 L53.100 524.300 L49.100 528"/>
</g>
<path d="M254 519 V529.600 M248.700 524.300 H259.300" stroke="#d8d8d8" stroke-width="1.3"/>
<circle cx="431.600" cy="521.600" r="1.05" fill="#e8e8e8"/><circle cx="431.600" cy="525.300" r="1.05" fill="#e8e8e8"/><circle cx="431.600" cy="529" r="1.05" fill="#e8e8e8"/>
<path d="M456.500 520.300 V528.100 L450.300 524.200 Z" fill="#a6a6a6"/>
<rect x="461.100" y="520.600" width="215.700" height="7.200" rx="3.600" fill="#9b9b9b"/>
<path d="M688.200 520.300 V528.100 L694.400 524.200 Z" fill="#a6a6a6"/>
<!-- status icons -->
<g stroke="#e0e0e0" stroke-width="1.1" stroke-linejoin="round" stroke-linecap="round">
<path d="M50.600 544 H62.800 V548.400 M50.600 544 V553.800 H56.200"/>
<path d="M50.600 546.200 H62.800" stroke-width="1.600"/>
<path d="M52.600 549 h3 M52.600 551.400 h2.600"/>
<circle cx="59.800" cy="551.200" r="3"/>
<circle cx="59.800" cy="551.200" r="1.05" fill="#e8e8e8"/>
<circle cx="84" cy="544.400" r="1.300"/>
<path d="M78.600 546.600 c2 1.200 8.800 1.200 10.800 0 M81.800 547.600 v3 l-2.600 4 M86.200 547.600 v2.400"/>
<path d="M84.600 552 l2.200 2.400 l3.800 -4.200"/>
</g>
<g stroke="#f0f0f0" stroke-width="1.300">
<rect x="454.300" y="543.100" width="10.600" height="10.600"/>
<path d="M457.900 543.100 V553.700 M461.400 543.100 V553.700 M454.300 546.700 H464.900 M454.300 550.200 H464.900"/>
</g>
<g stroke="#e0e0e0" stroke-width="1.200">
<rect x="489.700" y="543.100" width="11.800" height="10.600"/>
<rect x="493.200" y="545.600" width="4.800" height="5.800" stroke-width="1"/>
<path d="M494.400 547.600 h2.400 M494.400 549.500 h2.400" stroke-width="0.800"/>
<rect x="524.700" y="543.100" width="11.800" height="10.600"/>
<path d="M528 543.100 V548.400 H533.600 V543.100 M530.800 543.100 V548.400"/>
</g>
<path d="M553.200 548.700 H559.900" stroke="#c8c8c8" stroke-width="1.100"/>
<path d="M565 548.700 H652.600" stroke="#8e8e8e" stroke-width="1.100"/>
<rect x="606.400" y="543.500" width="4.600" height="10.200" rx="0.800" fill="#b4b4b4"/>
<path d="M657.400 548.800 H664 M660.700 545.500 V552.100" stroke="#d0d0d0" stroke-width="1.100"/>
</svg>
<span class="t" style='left:104.40px;top:520.00px;font-size:12.8px;color:#f0f0f0;transform:scaleX(0.8766);-webkit-text-stroke:0.18px;'>Sheet1</span>
<span class="t" style='left:162.60px;top:517.00px;font-size:12.8px;color:#1a1a1a;transform:scaleX(0.9285);-webkit-text-stroke:0.18px;'>Sheet2</span>
<span class="t" style='left:9.30px;top:545.00px;font-size:10px;color:#f0f0f0;transform:scaleX(0.8562);-webkit-text-stroke:0.18px;'>Ready</span>
<span class="t" style='left:94.60px;top:545.00px;font-size:10px;color:#f0f0f0;transform:scaleX(0.8973);-webkit-text-stroke:0.18px;'>Accessibility: Good to go</span>
<span class="t" style='left:676.40px;top:544.00px;font-size:10px;color:#f0f0f0;transform:scaleX(0.8585);-webkit-text-stroke:0.18px;'>100%</span>
</div></body></html>
